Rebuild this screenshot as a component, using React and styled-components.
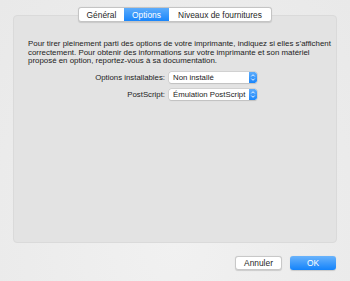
import styled, { createGlobalStyle } from "styled-components";

const GlobalStyle = createGlobalStyle`
  html, body {
    margin: 0;
    padding: 0;
  }
  body {
    font-family: "Liberation Sans", Arial, sans-serif;
    -webkit-font-smoothing: antialiased;
  }
`;

const Window = styled.div`
  width: 350px;
  height: 281px;
  box-sizing: border-box;
  padding: 7px 13px 0 13px;
  background: radial-gradient(ellipse at 50% 85%, #f1f1f1 0%, #ececec 60%, #e9e9e9 100%);
  display: flex;
  flex-direction: column;
`;

// TABS
const TabBar = styled.div`
  position: relative;
  z-index: 1;
  align-self: center;
  display: flex;
  height: 13px;
  border: 1px solid #c4c4c4;
  border-radius: 3px;
  background: #ffffff;
  box-shadow: 0 0.5px 1px rgba(0, 0, 0, 0.12);
  overflow: hidden;
`;

const Tab = styled.div`
  width: ${(p) => p.w}px;
  display: flex;
  align-items: center;
  justify-content: center;
  font-size: 8.4px;
  color: ${(p) => (p.active ? "#ffffff" : "#1f1f1f")};
  background: ${(p) =>
    p.active ? "linear-gradient(#5dacfb, #1a86fb)" : "transparent"};
  border-left: ${(p) => (p.first || p.active || p.afterActive ? "none" : "1px solid #d0d0d0")};
`;

// PANEL
const Panel = styled.div`
  margin-top: -7px;
  height: 228px;
  box-sizing: border-box;
  background: #e3e3e3;
  border: 1px solid #dadada;
  border-radius: 4px;
  padding: 24px 14px 0 14px;
`;

const Intro = styled.p`
  margin: 0;
  font-size: 7.9px;
  line-height: 8.6px;
  color: #222222;
  white-space: nowrap;
`;

const Form = styled.div`
  margin-top: 6px;
  display: grid;
  grid-template-columns: 137px 88px;
  column-gap: 4px;
  row-gap: 6px;
  align-items: center;
`;

const Label = styled.label`
  text-align: right;
  font-size: 7.8px;
  color: #222222;
`;

const Select = styled.div`
  height: 11px;
  display: flex;
  align-items: stretch;
  background: #ffffff;
  border-radius: 2.5px;
  box-shadow: 0 0 0 0.5px #c2c2c2, 0 0.5px 1px rgba(0, 0, 0, 0.15);
  overflow: hidden;
`;

const SelectValue = styled.span`
  flex: 1;
  padding-left: 4px;
  font-size: 7.8px;
  line-height: 11px;
  color: #222222;
  white-space: nowrap;
  overflow: hidden;
`;

const SelectArrow = styled.span`
  width: 8px;
  display: flex;
  align-items: center;
  justify-content: center;
  background: linear-gradient(#5dacfb, #1a86fb);
  border-radius: 0 2.5px 2.5px 0;
`;

// FOOTER
const Footer = styled.div`
  margin-top: 13px;
  display: flex;
  justify-content: flex-end;
  gap: 8px;
  padding-right: 1px;
`;

const Button = styled.button`
  width: ${(p) => p.w}px;
  height: 14px;
  padding: 0;
  box-sizing: border-box;
  font-family: inherit;
  font-size: 8.4px;
  border-radius: 3px;
  border: ${(p) => (p.primary ? "none" : "1px solid #c8c8c8")};
  color: ${(p) => (p.primary ? "#ffffff" : "#1f1f1f")};
  background: ${(p) =>
    p.primary ? "linear-gradient(#6ab3fb, #1383fb)" : "#ffffff"};
  box-shadow: 0 0.5px 1px rgba(0, 0, 0, 0.15);
`;

const Chevrons = () => (
  <svg width="6" height="9" viewBox="0 0 6 9">
    <path d="M1.3 3.4 L3 1.7 L4.7 3.4" fill="none" stroke="#fff" strokeWidth="0.9" />
    <path d="M1.3 5.6 L3 7.3 L4.7 5.6" fill="none" stroke="#fff" strokeWidth="0.9" />
  </svg>
);

const App = () => {
  return (
    <Window>
      <GlobalStyle />
      <TabBar>
        <Tab w={45} first>Général</Tab>
        <Tab w={45} active>Options</Tab>
        <Tab w={102} afterActive>Niveaux de fournitures</Tab>
      </TabBar>

      <Panel>
        <Intro>
          Pour tirer pleinement parti des options de votre imprimante, indiquez si elles s’affichent
          <br />
          correctement. Pour obtenir des informations sur votre imprimante et son matériel
          <br />
          proposé en option, reportez-vous à sa documentation.
        </Intro>

        <Form>
          <Label>Options installables:</Label>
          <Select>
            <SelectValue>Non installé</SelectValue>
            <SelectArrow>
              <Chevrons />
            </SelectArrow>
          </Select>
          <Label>PostScript:</Label>
          <Select>
            <SelectValue>Émulation PostScript</SelectValue>
            <SelectArrow>
              <Chevrons />
            </SelectArrow>
          </Select>
        </Form>
      </Panel>

      <Footer>
        <Button w={47}>Annuler</Button>
        <Button w={46} primary>OK</Button>
      </Footer>
    </Window>
  );
};

export default App;
